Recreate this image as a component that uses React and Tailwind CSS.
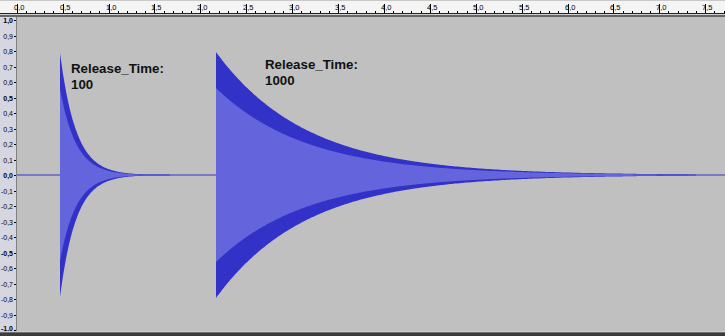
import React from 'react';

// time axis: 0.0 tick sits at x=16.7, one second is 91.8px
const PPS = 91.8;
const T0 = 16.7;
const CY = 158; // centre line inside the plot
const SCALE = 155; // px per 1.0 of amplitude

const DARK = '#3232c8';
const LIGHT = '#6464dc';

function envPath(x0, amp, tau, len, k) {
  const top = [];
  const bot = [];
  for (let i = 0; i <= len; i++) {
    const a = Math.max(amp * k * Math.exp(-i / tau), 0.5);
    top.push(`${x0 + i},${(CY - a).toFixed(1)}`);
    bot.push(`${x0 + i},${(CY + a).toFixed(1)}`);
  }
  bot.reverse();
  return `M${x0},${CY} L${top.join(' L')} L${bot.join(' L')} Z`;
}

const waves = [
  { x0: 43, amp: 122, tau: 16, len: 110 },
  { x0: 199, amp: 123, tau: 90, len: 480 },
];

const fmt = (v) => v.toFixed(1).replace('.', ',');

function TimeRuler() {
  const majors = [];
  for (let i = 0; i <= 15; i++) majors.push(i * 0.5);
  const minors = [];
  for (let i = 0; i <= 77; i++) if (i % 5) minors.push(i * 0.1);
  return (
    <svg width="725" height="13" className="block">
      {minors.map((t) => {
        const x = Math.round(T0 + t * PPS) + 0.5;
        return <line key={t} x1={x} x2={x} y1="11" y2="13" stroke="#000" strokeWidth="1" />;
      })}
      {majors.map((t) => {
        const x = Math.round(T0 + t * PPS) + 0.5;
        return (
          <g key={t}>
            <line x1={x} x2={x} y1="4" y2="13" stroke="#000" strokeWidth="1" />
            <text x={x - 3.5} y="9.5" fontSize="7.5" fill="#000" style={{ fontFamily: '"Liberation Sans", Arial, sans-serif' }}>
              {fmt(t)}
            </text>
          </g>
        );
      })}
    </svg>
  );
}

function AmpRuler() {
  const vals = [];
  for (let i = 10; i >= -10; i--) vals.push(i / 10);
  return (
    <svg width="16" height="314" className="block">
      {vals.map((v) => {
        const y = Math.round(CY - v * SCALE);
        const major = Math.abs(Math.round(v * 10)) % 5 === 0;
        return (
          <g key={v}>
            <text
              x="13"
              y={Math.min(y + 2.5, 313.5)}
              textAnchor="end"
              fontSize="7"
              fontWeight={major ? 700 : 400}
              fill="#000"
              style={{ fontFamily: '"Liberation Sans", Arial, sans-serif' }}
            >
              {fmt(v)}
            </text>
            <line x1="14" x2="16" y1={y + 0.5} y2={y + 0.5} stroke="#000" strokeWidth="1" />
          </g>
        );
      })}
    </svg>
  );
}

function Waveform() {
  return (
    <svg width="708" height="314" className="absolute inset-0 block">
      <line x1="0" x2="708" y1={CY} y2={CY} stroke={DARK} strokeWidth="1" />
      {waves.map((w, i) => (
        <g key={i}>
          <path d={envPath(w.x0, w.amp, w.tau, w.len, 1)} fill={DARK} />
          <path d={envPath(w.x0, w.amp, w.tau, w.len, 0.707)} fill={LIGHT} />
        </g>
      ))}
    </svg>
  );
}

export default function App() {
  return (
    <div className="w-[725px] h-[336px] flex flex-col bg-[#c0c0c0] overflow-hidden">
      <div className="h-[13px] bg-[#f4f4f4] border-t border-[#c8c8c8] overflow-hidden">
        <div className="-mt-px">
          <TimeRuler />
        </div>
      </div>
      <div className="h-px bg-[#222]" />
      <div className="h-px bg-[#cfcfcf]" />
      <div className="h-[2px] bg-[#666]" />
      <div className="h-[314px] flex">
        <div className="w-[17px] bg-[#d6d6e0] border-r border-[#808080]">
          <AmpRuler />
        </div>
        <div className="flex-1 relative bg-[#c0c0c0]">
          <Waveform />
          <div
            className="absolute left-[54px] top-[44px] text-[13.3px] leading-[16px] font-bold text-[#111]"
            style={{ fontFamily: '"Liberation Sans", Arial, sans-serif' }}
          >
            <div>Release_Time:</div>
            <div>100</div>
          </div>
          <div
            className="absolute left-[248px] top-[40px] text-[13.3px] leading-[16px] font-bold text-[#111]"
            style={{ fontFamily: '"Liberation Sans", Arial, sans-serif' }}
          >
            <div>Release_Time:</div>
            <div>1000</div>
          </div>
        </div>
      </div>
      <div className="h-px bg-[#cfcfcf]" />
      <div className="h-px bg-[#707070]" />
      <div className="h-[3px] bg-[#3c3c3c]" />
    </div>
  );
}
